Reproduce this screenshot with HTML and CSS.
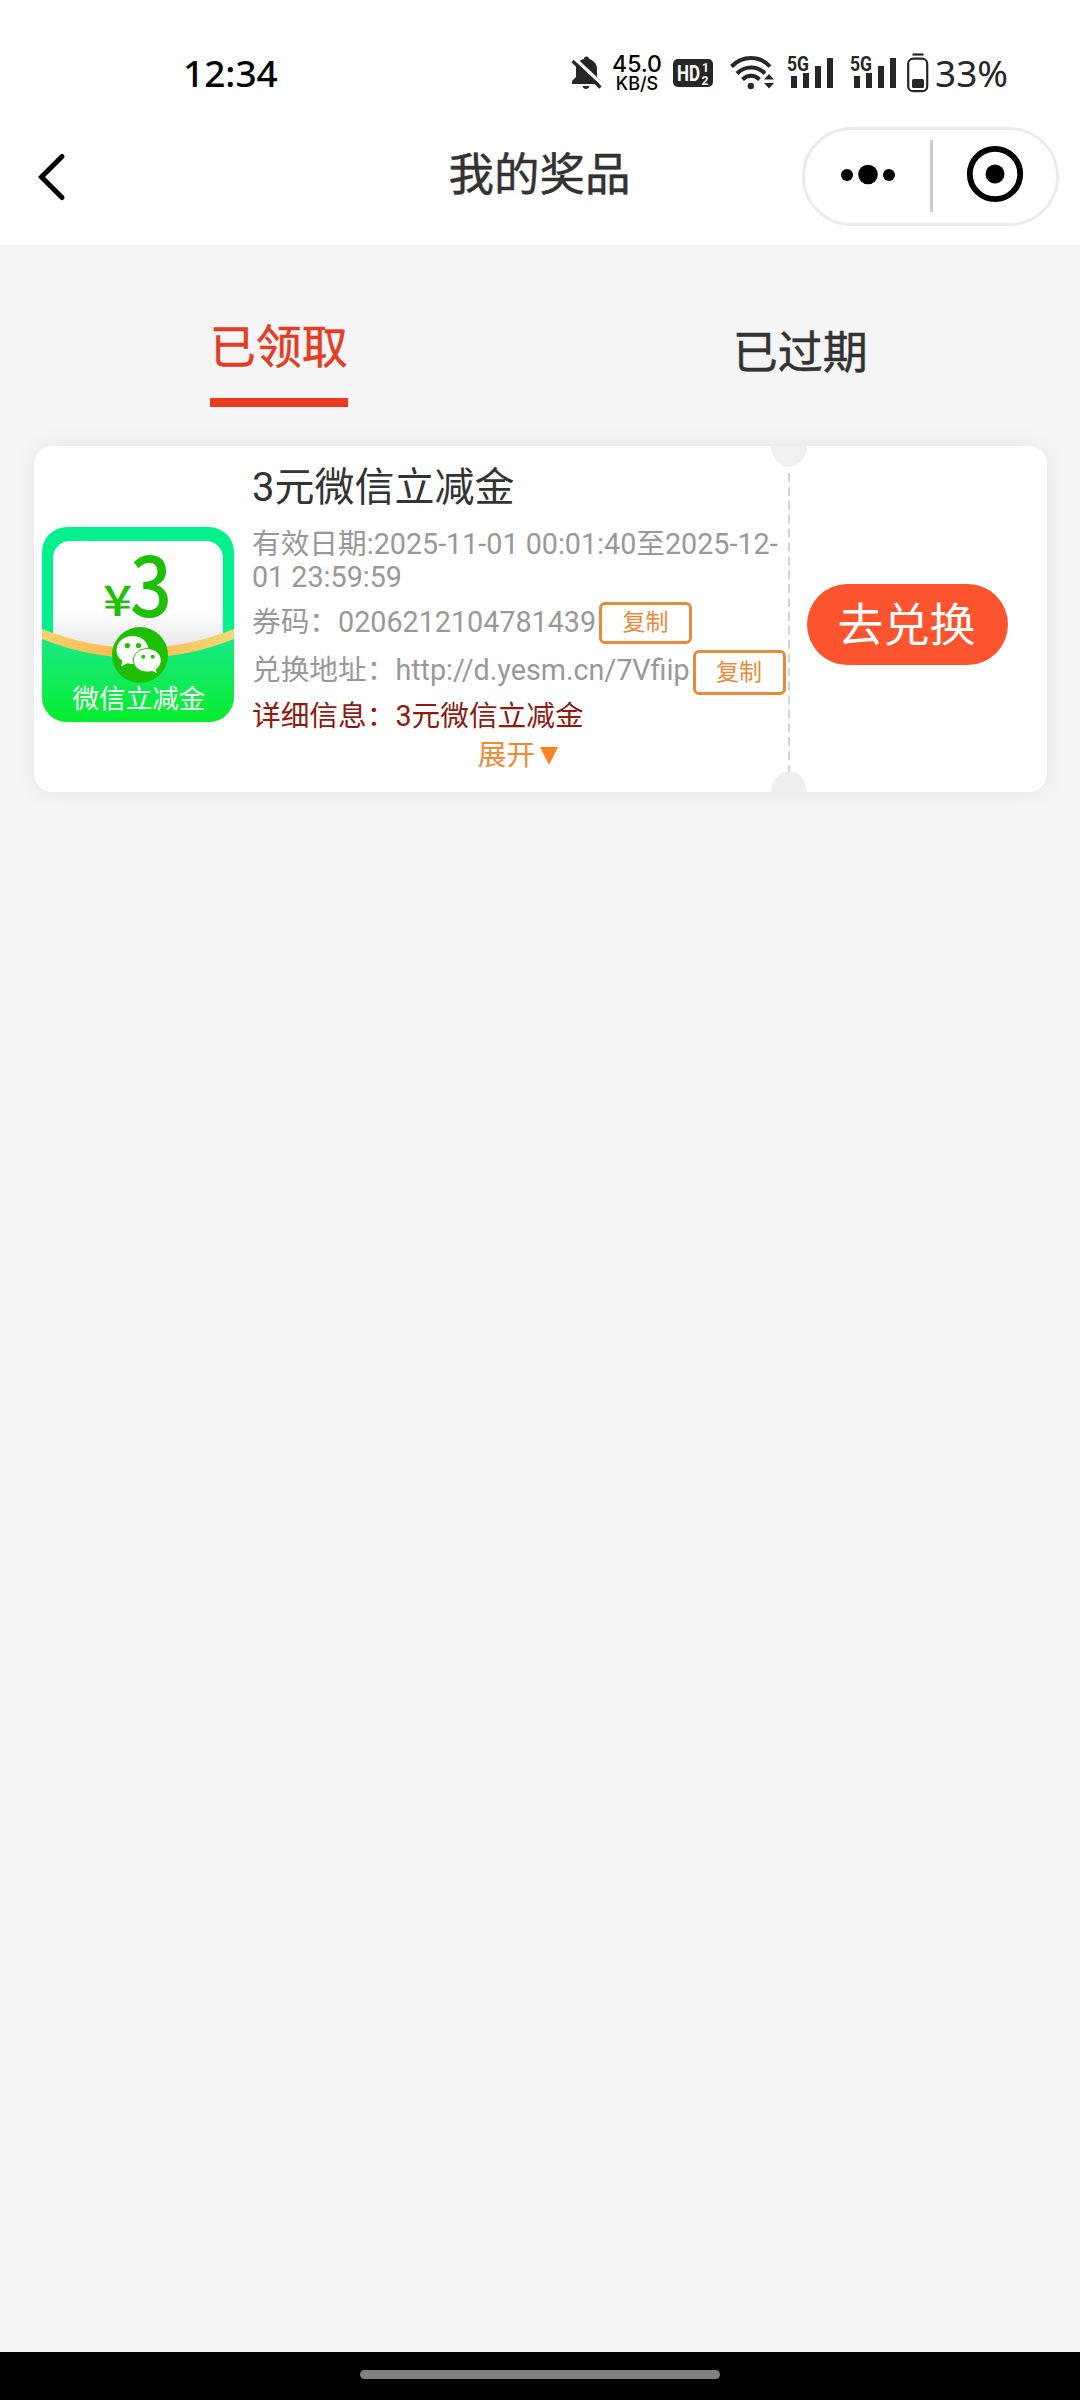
FILE: index.html
```html
<!DOCTYPE html>
<html lang="zh-CN">
<head>
<meta charset="utf-8">
<title>我的奖品</title>
<link rel="stylesheet" href="styles.css">
</head>
<body>
<div class="screen">
  <header class="top">
    <div class="status">
      <span class="time">12:34</span>
      <div class="indicators">
        <svg class="bell" width="32" height="36" viewBox="0 0 32 36">
          <path d="M15.500 1.500c1.600 0 2.500 1 2.600 2.400c4.800 1.200 7.900 5.200 7.900 10v8.100l5 5v2H1v-3l4-4V14c0-5 3.100-8.900 7.900-10c.1-1.500 1-2.500 2.600-2.500z" fill="#262626"/>
          <path d="M11.500 31h7c-.5 2-1.800 3-3.500 3s-3-1-3.500-3z" fill="#262626"/>
          <path d="M3.500 3.500L33 31" stroke="#fff" stroke-width="3.500"/>
          <path d="M1.500 6L29.500 32.500" stroke="#262626" stroke-width="3.200"/>
        </svg>
        <div class="speed"><span class="rate">45.0</span><span class="unit">KB/S</span></div>
        <svg class="hd" width="40" height="28" viewBox="0 0 40 28">
          <rect width="40" height="28" rx="5" fill="#262626"/>
          <text x="4" y="22" class="hd-main" textLength="23" lengthAdjust="spacingAndGlyphs">HD</text>
          <text x="29" y="13" class="hd-sim">1</text>
          <text x="28.500" y="25.500" class="hd-sim">2</text>
        </svg>
        <svg class="wifi" width="46" height="36" viewBox="0 0 46 36">
          <g fill="none" stroke="#262626" stroke-width="4">
            <path d="M1.500 11.500C12.500 .200 29.500 .200 40 11.500"/>
            <path d="M7 18.500C15 10.500 27 10.500 35 18.500"/>
            <path d="M12.500 24.500C17.500 19.500 24.500 19.500 29.500 24.500"/>
          </g>
          <circle cx="20.800" cy="31" r="3.200" fill="#262626"/>
          <path d="M34 24.500l5-5.500l5 5.500zM34 28h10l-5 5.500z" fill="#262626"/>
        </svg>
        <svg class="cell" width="48" height="34" viewBox="0 0 48 34">
          <text x="0" y="15" class="net" textLength="22" lengthAdjust="spacingAndGlyphs">5G</text>
          <path d="M4 20h6v12H4zM16 17h6v15h-6zM28 10h6v22h-6zM40 2h6v30h-6z" fill="#262626"/>
        </svg>
        <svg class="cell" width="48" height="34" viewBox="0 0 48 34">
          <text x="0" y="15" class="net" textLength="22" lengthAdjust="spacingAndGlyphs">5G</text>
          <path d="M4 20h6v12H4zM16 17h6v15h-6zM28 10h6v22h-6zM40 2h6v30h-6z" fill="#262626"/>
        </svg>
        <svg class="battery" width="22" height="40" viewBox="0 0 22 40">
          <path d="M5.500 1.500h11" stroke="#262626" stroke-width="2.200"/>
          <rect x="1.200" y="5.700" width="19" height="32.500" rx="5" fill="none" stroke="#262626" stroke-width="2.200"/>
          <rect x="5" y="26" width="12" height="9" rx="1.500" fill="#262626"/>
        </svg>
        <span class="percent">33%</span>
      </div>
    </div>
    <div class="nav">
      <svg class="back" width="30" height="46" viewBox="0 0 30 46"><path d="M26 2.500L5.500 23L26 43.500" fill="none" stroke="#000" stroke-width="5" stroke-linecap="round"/></svg>
      <h1 class="title">我的奖品</h1>
      <div class="capsule">
        <svg class="dots" width="56" height="22" viewBox="0 0 56 22"><circle cx="7" cy="11" r="6"/><circle cx="28" cy="10.500" r="9.800"/><circle cx="49" cy="11" r="6"/></svg>
        <span class="split"></span>
        <svg class="target" width="58" height="58" viewBox="0 0 58 58"><circle cx="29" cy="29" r="25.200" fill="none" stroke="#000" stroke-width="5.800"/><circle cx="29" cy="29" r="9.500"/></svg>
      </div>
    </div>
  </header>

  <main class="body">
    <div class="tabs">
      <div class="tab"><span class="tab-label active">已领取</span></div>
      <div class="tab"><span class="tab-label">已过期</span></div>
    </div>

    <section class="card">
      <svg class="thumb" width="192" height="195" viewBox="0 0 192 195">
        <defs>
          <clipPath id="round"><rect width="192" height="195" rx="25"/></clipPath>
          <linearGradient id="pocket" x1="0" y1="0" x2="0" y2="1"><stop offset="0" stop-color="#1ae886"/><stop offset="1" stop-color="#06ed2d"/></linearGradient>
          <linearGradient id="paper" x1="0" y1="0" x2="0" y2="1"><stop offset=".55" stop-color="#fff"/><stop offset=".9" stop-color="#e4e3e8"/></linearGradient>
          <linearGradient id="gold" x1="0" y1="0" x2="1" y2="0"><stop offset="0" stop-color="#f9d070"/><stop offset=".45" stop-color="#ffb84c"/><stop offset="1" stop-color="#f2d878"/></linearGradient>
        </defs>
        <g clip-path="url(#round)">
          <rect width="192" height="195" fill="#02f18c"/>
          <rect x="11" y="14" width="170" height="125" rx="17" fill="url(#paper)"/>
          <path d="M0 102Q96 140 192 102V195H0z" fill="url(#gold)"/>
          <path d="M0 112Q96 150 192 112V195H0z" fill="url(#pocket)"/>
          <circle cx="98" cy="128" r="28" fill="#1fbf05"/>
          <path d="M90.500 109c9 0 16 6.200 16 14s-7 14-16 14c-1.800 0-3.500-.2-5-.7L79 139.500l1.500-5.500c-3.800-2.600-6-6.500-6-11c0-7.800 7.200-14 16-14z" fill="#fff"/>
          <path d="M105.300 121.500c7.800 0 14 5.200 14 11.800c0 3.700-2 6.900-5 9l1.200 4.700l-5-2.500c-1.600.4-3.400.6-5.200.6c-7.800 0-14-5.200-14-11.800s6.200-11.800 14-11.800z" fill="#fff" stroke="#1fbf05" stroke-width="1"/>
          <g fill="#1fbf05"><circle cx="85.300" cy="118.500" r="2.600"/><circle cx="96.500" cy="118.500" r="2.600"/><circle cx="101.300" cy="129.700" r="2"/><circle cx="110.700" cy="129.700" r="2"/></g>
        </g>
        <text x="61" y="89" class="yen" textLength="29" lengthAdjust="spacingAndGlyphs">¥</text>
        <text x="88" y="89.500" class="amount" textLength="42" lengthAdjust="spacingAndGlyphs">3</text>
        <text x="30.500" y="181" class="caption">微信立减金</text>
      </svg>

      <div class="info">
        <h2 class="name">3元微信立减金</h2>
        <p class="date">有效日期:2025-11-01 00:01:40至2025-12-<br>01 23:59:59</p>
        <div class="row code"><span>券码：0206212104781439</span><button class="copy">复制</button></div>
        <div class="row link"><span>兑换地址：http://d.yesm.cn/7Vfiip</span><button class="copy">复制</button></div>
        <p class="detail">详细信息：3元微信立减金</p>
        <p class="expand">展开<svg width="18" height="18" viewBox="0 0 18 18"><path d="M0 0h18L9 18z" fill="#fc8320"/></svg></p>
      </div>

      <div class="action"><button class="redeem">去兑换</button></div>

      <svg class="tear" width="60" height="346" viewBox="0 0 60 346">
        <path d="M30 27V326" stroke="#d4d4d8" stroke-width="2" stroke-dasharray="9 4.900"/>
        <path d="M12 0A18 20.500 0 0 0 48 0z" fill="#f0f0f0"/>
        <path d="M12 346A18 20.500 0 0 1 48 346z" fill="#efefef"/>
      </svg>
    </section>
  </main>

  <footer class="gesture"><span class="pill"></span></footer>
</div>
</body>
</html>
```
FILE: styles.css
```css
* { box-sizing: border-box; }
body, h1, h2, p { margin: 0; font-weight: 400; }
svg { display: block; flex: none; overflow: visible; }
button { font: inherit; margin: 0; padding: 0; }

.screen {
  width: 1080px;
  height: 2400px;
  display: flex;
  flex-direction: column;
  background: #f5f5f5;
  font-family: Roboto, "Noto Sans CJK SC", sans-serif;
  color: #333;
}

/* status bar and navigation */
.top { height: 245px; background: #fff; }
.status {
  height: 110px;
  padding: 36px 72px 0 183px;
  display: flex;
  justify-content: space-between;
  align-items: center;
  font-family: "Noto Sans", sans-serif;
}
.time { font-size: 37px; line-height: 40px; font-weight: 500; color: #000; }
.indicators { display: flex; align-items: center; }
.bell { margin-right: 9px; }
.speed {
  width: 50px;
  margin-right: 11px;
  display: flex;
  flex-direction: column;
  align-items: center;
  color: #000;
  font-family: Inter, sans-serif;
  font-weight: 500;
}
.rate { font-size: 23px; line-height: 21px; }
.unit { font-size: 18px; line-height: 18px; }
.hd { margin-right: 17px; }
.wifi { margin-right: 11px; }
.cell { margin-right: 15px; }
.hd-main { font: 700 22px Roboto, sans-serif; fill: #fff; }
.hd-sim { font: 700 12px Roboto, sans-serif; fill: #fff; }
.net { font: 700 20px Roboto, sans-serif; fill: #262626; }
.battery { margin-right: 6px; margin-left: -6px; }
.percent { width: 73px; font-size: 37px; line-height: 40px; color: #262626; white-space: nowrap; }

.nav {
  height: 135px;
  padding: 0 21px 0 36px;
  display: grid;
  grid-template-columns: 241px 1fr 257px;
  align-items: start;
}
.back { margin-top: 44px; }
.title { margin-top: 36px; text-align: center; font-size: 45.500px; line-height: 60px; font-weight: 400; -webkit-text-stroke: .5px; }
.capsule {
  height: 99px;
  margin-top: 17px;
  border: 3px solid #ebebeb;
  border-radius: 50px;
  display: flex;
  align-items: center;
}
.dots { margin: 0 0 4px 35px; }
.split { width: 3px; height: 72px; margin: 0 0 2px 34px; background: #ccc; }
.target { margin: 0 0 5px 33px; }

/* tabs */
.body { flex: 1; }
.tabs { height: 201px; display: grid; grid-template-columns: 1fr 1fr; padding: 0 19px 0 18px; }
.tab { text-align: center; padding-top: 79px; }
.tab-label { display: inline-block; font-size: 45px; line-height: 60px; -webkit-text-stroke: .5px; }
.active { margin-top: -7px; height: 90px; border-bottom: 9px solid #ea3b21; color: #e03e26; font-size: 46px; }

/* ticket */
.card {
  position: relative;
  height: 346px;
  margin: 0 33px 0 34px;
  border-radius: 18px;
  background: #fff;
  box-shadow: 0 0 22px rgba(0, 0, 0, .07);
  display: flex;
}
.thumb { margin: 81px 18px 0 8px; }
.yen { font: 500 42px "Noto Sans CJK SC", sans-serif; fill: #1fbf05; }
.amount { font: 500 82px "Noto Sans CJK SC", sans-serif; fill: #1fbf05; }
.caption { font: 400 26.600px "Noto Sans CJK SC", sans-serif; fill: #fff; }

.info { width: 536px; padding-top: 18px; font-size: 28.700px; line-height: 33px; color: #999; white-space: nowrap; }
.name { font-size: 40px; line-height: 48px; color: #333; }
.date { margin-top: 16px; }
.row { display: flex; }
.code { margin-top: 8px; height: 48px; }
.code span { padding-top: 4px; }
.link { height: 45px; }
.link span { padding-top: 4px; }
.copy {
  width: 93px;
  height: 42px;
  margin-left: 3px;
  border: 3px solid #e88a3c;
  border-radius: 6px;
  background: #fff;
  color: #e88a3c;
  font-size: 23px;
  line-height: 36px;
}
.link .copy { height: 45px; line-height: 37px; }
.detail { margin-top: 5px; color: #8b1a10; }
.expand { margin-top: 6px; padding-right: 4px; color: #f08a35; display: flex; justify-content: center; align-items: center; gap: 5px; }

.action { flex: 1; padding: 138px 0 0 19px; }
.redeem {
  width: 201px;
  height: 81px;
  padding-right: 2px;
  border: 0;
  border-radius: 41px;
  background: #fb542f;
  color: #fff;
  font-size: 46px;
  line-height: 76px;
}
.tear { position: absolute; left: 725px; top: 0; }

/* system gesture bar */
.gesture { height: 48px; background: #000; display: flex; justify-content: center; padding-top: 18px; }
.pill { width: 360px; height: 9px; border-radius: 5px; background: #808080; }
```
